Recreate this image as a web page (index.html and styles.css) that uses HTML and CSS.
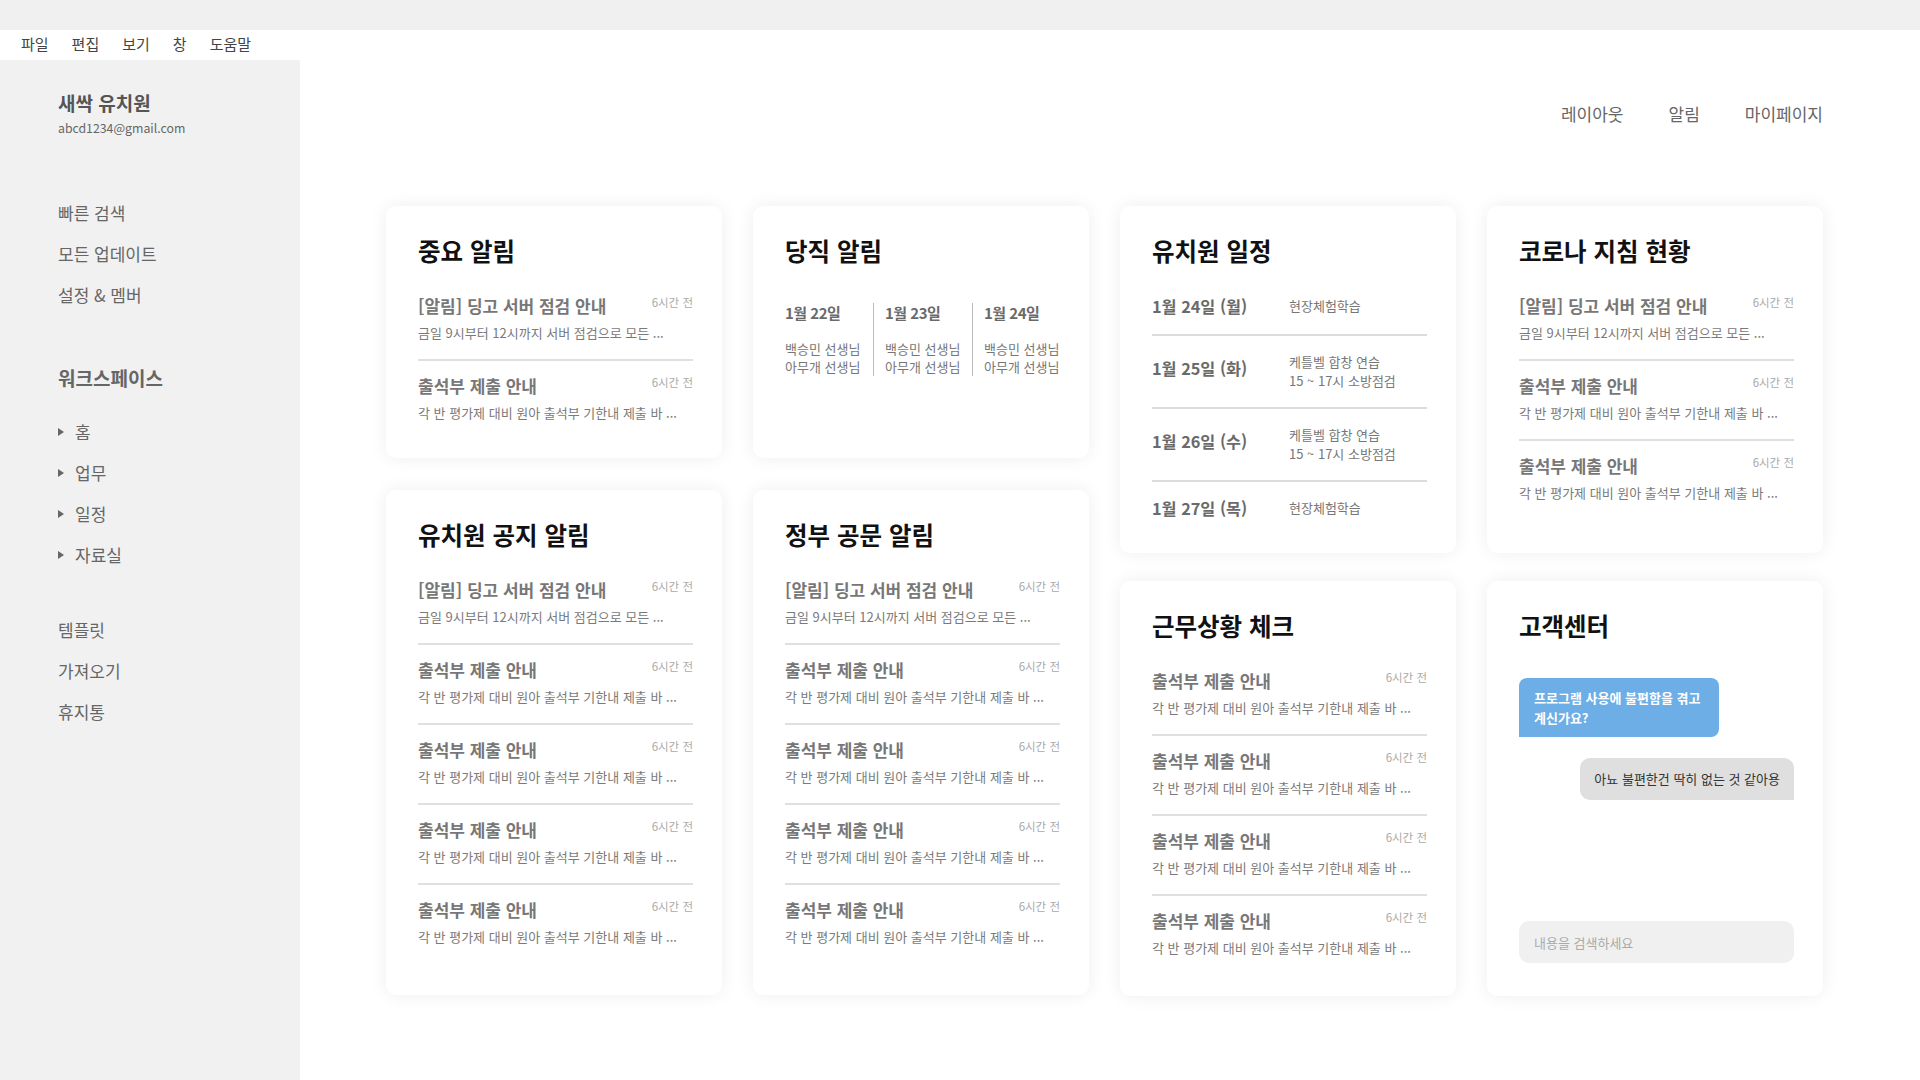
FILE: index.html
```html
<!DOCTYPE html>
<html lang="ko">
<head>
<meta charset="utf-8">
<title>새싹 유치원</title>
<link rel="stylesheet" href="styles.css">
</head>
<body>
<div class="titlebar"></div>
<nav class="menubar">
  <span>파일</span><span>편집</span><span>보기</span><span>창</span><span>도움말</span>
</nav>
<div class="app">
  <aside class="sidebar">
    <div class="org-name">새싹 유치원</div>
    <div class="org-mail">abcd1234@gmail.com</div>
    <ul class="side-list side-list--top">
      <li>빠른 검색</li>
      <li>모든 업데이트</li>
      <li>설정 &amp; 멤버</li>
    </ul>
    <div class="side-heading">워크스페이스</div>
    <ul class="side-list side-list--tree">
      <li><i class="tri"></i>홈</li>
      <li><i class="tri"></i>업무</li>
      <li><i class="tri"></i>일정</li>
      <li><i class="tri"></i>자료실</li>
    </ul>
    <ul class="side-list side-list--bottom">
      <li>템플릿</li>
      <li>가져오기</li>
      <li>휴지통</li>
    </ul>
  </aside>
  <main class="main">
    <header class="topnav">
      <span>레이아웃</span><span>알림</span><span>마이페이지</span>
    </header>
    <section class="board">
      <div class="col col--a">
        <article class="card card--h252">
          <h2 class="card-title">중요 알림</h2>
          <ul class="news">
            <li class="news-item"><div class="news-head"><span class="news-title">[알림] 딩고 서버 점검 안내</span><span class="news-time">6시간 전</span></div><p class="news-sub">금일 9시부터 12시까지 서버 점검으로 모든 ...</p></li>
            <li class="news-item"><div class="news-head"><span class="news-title">출석부 제출 안내</span><span class="news-time">6시간 전</span></div><p class="news-sub">각 반 평가제 대비 원아 출석부 기한내 제출 바 ...</p></li>
          </ul>
        </article>
        <article class="card card--h505">
          <h2 class="card-title">유치원 공지 알림</h2>
          <ul class="news">
            <li class="news-item"><div class="news-head"><span class="news-title">[알림] 딩고 서버 점검 안내</span><span class="news-time">6시간 전</span></div><p class="news-sub">금일 9시부터 12시까지 서버 점검으로 모든 ...</p></li>
            <li class="news-item"><div class="news-head"><span class="news-title">출석부 제출 안내</span><span class="news-time">6시간 전</span></div><p class="news-sub">각 반 평가제 대비 원아 출석부 기한내 제출 바 ...</p></li>
            <li class="news-item"><div class="news-head"><span class="news-title">출석부 제출 안내</span><span class="news-time">6시간 전</span></div><p class="news-sub">각 반 평가제 대비 원아 출석부 기한내 제출 바 ...</p></li>
            <li class="news-item"><div class="news-head"><span class="news-title">출석부 제출 안내</span><span class="news-time">6시간 전</span></div><p class="news-sub">각 반 평가제 대비 원아 출석부 기한내 제출 바 ...</p></li>
            <li class="news-item"><div class="news-head"><span class="news-title">출석부 제출 안내</span><span class="news-time">6시간 전</span></div><p class="news-sub">각 반 평가제 대비 원아 출석부 기한내 제출 바 ...</p></li>
          </ul>
        </article>
      </div>
      <div class="col col--a">
        <article class="card card--h252">
          <h2 class="card-title">당직 알림</h2>
          <div class="duty">
            <div class="duty-col"><div class="duty-date">1월 22일</div><div class="duty-names">백승민 선생님<br>아무개 선생님</div></div>
            <div class="duty-col"><div class="duty-date">1월 23일</div><div class="duty-names">백승민 선생님<br>아무개 선생님</div></div>
            <div class="duty-col"><div class="duty-date">1월 24일</div><div class="duty-names">백승민 선생님<br>아무개 선생님</div></div>
          </div>
        </article>
        <article class="card card--h505">
          <h2 class="card-title">정부 공문 알림</h2>
          <ul class="news">
            <li class="news-item"><div class="news-head"><span class="news-title">[알림] 딩고 서버 점검 안내</span><span class="news-time">6시간 전</span></div><p class="news-sub">금일 9시부터 12시까지 서버 점검으로 모든 ...</p></li>
            <li class="news-item"><div class="news-head"><span class="news-title">출석부 제출 안내</span><span class="news-time">6시간 전</span></div><p class="news-sub">각 반 평가제 대비 원아 출석부 기한내 제출 바 ...</p></li>
            <li class="news-item"><div class="news-head"><span class="news-title">출석부 제출 안내</span><span class="news-time">6시간 전</span></div><p class="news-sub">각 반 평가제 대비 원아 출석부 기한내 제출 바 ...</p></li>
            <li class="news-item"><div class="news-head"><span class="news-title">출석부 제출 안내</span><span class="news-time">6시간 전</span></div><p class="news-sub">각 반 평가제 대비 원아 출석부 기한내 제출 바 ...</p></li>
            <li class="news-item"><div class="news-head"><span class="news-title">출석부 제출 안내</span><span class="news-time">6시간 전</span></div><p class="news-sub">각 반 평가제 대비 원아 출석부 기한내 제출 바 ...</p></li>
          </ul>
        </article>
      </div>
      <div class="col col--b">
        <article class="card card--h347">
          <h2 class="card-title">유치원 일정</h2>
          <ul class="sched">
            <li class="sched-row"><span class="sched-date">1월 24일 (월)</span><span class="sched-text">현장체험학습</span></li>
            <li class="sched-row sched-row--multi"><span class="sched-date">1월 25일 (화)</span><span class="sched-text">케틀벨 합창 연습<br>15 ~ 17시 소방점검</span></li>
            <li class="sched-row sched-row--multi"><span class="sched-date">1월 26일 (수)</span><span class="sched-text">케틀벨 합창 연습<br>15 ~ 17시 소방점검</span></li>
            <li class="sched-row"><span class="sched-date">1월 27일 (목)</span><span class="sched-text">현장체험학습</span></li>
          </ul>
        </article>
        <article class="card card--h414">
          <h2 class="card-title">근무상황 체크</h2>
          <ul class="news">
            <li class="news-item"><div class="news-head"><span class="news-title">출석부 제출 안내</span><span class="news-time">6시간 전</span></div><p class="news-sub">각 반 평가제 대비 원아 출석부 기한내 제출 바 ...</p></li>
            <li class="news-item"><div class="news-head"><span class="news-title">출석부 제출 안내</span><span class="news-time">6시간 전</span></div><p class="news-sub">각 반 평가제 대비 원아 출석부 기한내 제출 바 ...</p></li>
            <li class="news-item"><div class="news-head"><span class="news-title">출석부 제출 안내</span><span class="news-time">6시간 전</span></div><p class="news-sub">각 반 평가제 대비 원아 출석부 기한내 제출 바 ...</p></li>
            <li class="news-item"><div class="news-head"><span class="news-title">출석부 제출 안내</span><span class="news-time">6시간 전</span></div><p class="news-sub">각 반 평가제 대비 원아 출석부 기한내 제출 바 ...</p></li>
          </ul>
        </article>
      </div>
      <div class="col col--b">
        <article class="card card--h347">
          <h2 class="card-title">코로나 지침 현황</h2>
          <ul class="news">
            <li class="news-item"><div class="news-head"><span class="news-title">[알림] 딩고 서버 점검 안내</span><span class="news-time">6시간 전</span></div><p class="news-sub">금일 9시부터 12시까지 서버 점검으로 모든 ...</p></li>
            <li class="news-item"><div class="news-head"><span class="news-title">출석부 제출 안내</span><span class="news-time">6시간 전</span></div><p class="news-sub">각 반 평가제 대비 원아 출석부 기한내 제출 바 ...</p></li>
            <li class="news-item"><div class="news-head"><span class="news-title">출석부 제출 안내</span><span class="news-time">6시간 전</span></div><p class="news-sub">각 반 평가제 대비 원아 출석부 기한내 제출 바 ...</p></li>
          </ul>
        </article>
        <article class="card card--h414 card--chat">
          <h2 class="card-title">고객센터</h2>
          <div class="bubble bubble--bot">프로그램 사용에 불편함을 겪고 계신가요?</div>
          <div class="bubble bubble--me">아뇨 불편한건 딱히 없는 것 같아용</div>
          <div class="chat-input">내용을 검색하세요</div>
        </article>
      </div>
    </section>
  </main>
</div>
</body>
</html>
```
FILE: styles.css
```css
* { box-sizing: border-box; }
html, body { margin: 0; padding: 0; }
body {
  width: 1920px;
  height: 1080px;
  overflow: hidden;
  background: #fff;
  font-family: "Noto Sans CJK KR", "Noto Sans", sans-serif;
  color: #666;
}
ul { list-style: none; margin: 0; padding: 0; }
p, h2 { margin: 0; }

.titlebar { height: 30px; background: #f0f0f0; }
.menubar {
  height: 30px;
  display: flex;
  align-items: center;
  gap: 23px;
  padding: 0 0 4px 21px;
  font-size: 15px;
  color: #444;
}

.app { display: flex; height: 1020px; }

.sidebar {
  width: 300px;
  flex: none;
  background: #f1f1f1;
  padding: 30px 0 0 58px;
}
.org-name { font-size: 19px; line-height: 26px; font-weight: 700; color: #555; }
.org-mail { margin-top: 3px; font-size: 12.3px; line-height: 18px; color: #666; }
.side-list li { font-size: 17px; line-height: 41px; color: #666; display: flex; align-items: center; }
.side-list--top { margin-top: 55px; }
.side-heading { margin-top: 50px; font-size: 19px; line-height: 26px; font-weight: 700; color: #666; }
.side-list--tree { margin-top: 20px; }
.side-list--bottom { margin-top: 34px; }
.tri {
  width: 0; height: 0;
  border-left: 6px solid #666;
  border-top: 4px solid transparent;
  border-bottom: 4px solid transparent;
  margin-right: 11px;
}

.main { flex: 1; padding: 42px 97px 0 86px; }
.topnav {
  display: flex;
  justify-content: flex-end;
  gap: 45px;
  font-size: 17px;
  line-height: 24px;
  color: #666;
}

.board {
  margin-top: 80px;
  display: grid;
  grid-template-columns: repeat(4, 336px);
  column-gap: 31px;
  align-items: start;
}
.col { display: flex; flex-direction: column; }
.col--a { gap: 32px; }
.col--b { gap: 28px; }

.card {
  background: #fff;
  border-radius: 10px;
  box-shadow: 0 0 18px rgba(0, 0, 0, 0.07);
  padding: 27px 29px 0 32px;
}
.card--h252 { height: 252px; }
.card--h505 { height: 505px; }
.card--h347 { height: 347px; }
.card--h414 { height: 415px; }

.card-title {
  font-size: 24.5px;
  line-height: 36px;
  font-weight: 700;
  color: #111;
}

.news { margin-top: 12px; }
.news-item { padding: 14px 0 16px; border-bottom: 2px solid #e0e0e0; }
.news-item:last-child { border-bottom: none; }
.news-head { display: flex; justify-content: space-between; align-items: flex-start; }
.news-title { font-size: 17px; line-height: 22px; font-weight: 700; color: #777; }
.news-time { font-size: 11.5px; line-height: 14px; color: #aaa; }
.news-sub { margin-top: 6px; font-size: 13px; line-height: 20px; color: #7a7a7a; white-space: nowrap; }

.duty { margin-top: 34px; display: flex; }
.duty-col { flex: none; width: 99px; padding-left: 11px; border-left: 1px solid #bbb; }
.duty-col:first-child { width: 88px; padding-left: 0; border-left: none; }
.duty-date { font-size: 15px; line-height: 20px; font-weight: 700; color: #6a6a6a; letter-spacing: -0.5px; }
.duty-names { margin-top: 17px; font-size: 13px; line-height: 18px; color: #777; white-space: nowrap; }

.sched { margin-top: 9px; }
.sched-row {
  display: grid;
  grid-template-columns: 137px 1fr;
  align-items: center;
  padding: 17px 0;
  border-bottom: 2px solid #dcdcdc;
}
.sched-row--multi { align-items: start; }
.sched-row--multi .sched-date { margin-top: 4px; }
.sched-row:last-child { border-bottom: none; padding-top: 15px; }
.sched-date { font-size: 16.3px; line-height: 22px; font-weight: 700; color: #6a6a6a; }
.sched-text { font-size: 13px; line-height: 18.5px; color: #777; }

.card--chat { display: flex; flex-direction: column; padding-bottom: 33px; }
.bubble { font-size: 13px; }
.bubble--bot {
  margin-top: 34px;
  width: 200px;
  padding: 10px 15px;
  line-height: 19.5px;
  background: #6daee6;
  color: #fff;
  font-weight: 700;
  border-radius: 8px 8px 8px 0;
}
.bubble--me {
  margin-top: 21px;
  align-self: flex-end;
  padding: 11px 14px;
  line-height: 20px;
  background: #dfdfdf;
  color: #333;
  border-radius: 10px 10px 0 10px;
}
.chat-input {
  margin-top: auto;
  height: 42px;
  border-radius: 10px;
  background: #f0f0f0;
  padding: 0 15px;
  display: flex;
  align-items: center;
  font-size: 13px;
  color: #aaa;
}
```
